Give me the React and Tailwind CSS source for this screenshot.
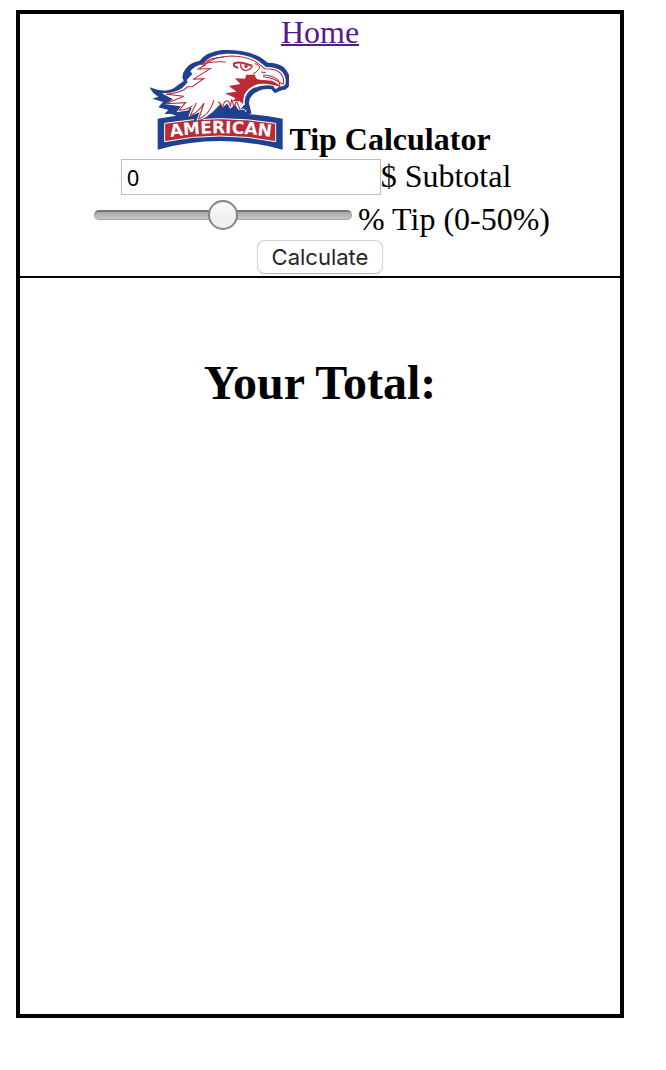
import { useState } from "react";

function EagleLogo() {
  return (
    <svg
      viewBox="28 30 420 300"
      role="img"
      aria-label="American eagle logo"
      className="h-[100px] w-[140px] shrink-0"
    >
      {/* blue outline of the head and feathers */}
      <path
        fill="#1f4190"
        d="M30 142 Q58 154 84 151 Q104 146 116 134 L132 123 L128 112 Q128 98 138 86 Q150 68 180 62 Q200 36 246 30 Q320 28 362 52 L385 68 Q412 68 431 80 Q452 100 451 126 Q448 150 426 151 L405 160 L395 148 Q368 144 344 160 Q328 172 328 190 L335 218 L318 226 L300 232 L190 242 L120 232 L96 222 L74 222 L86 210 L56 202 L70 186 L38 176 L56 170 Q38 160 30 142 Z"
      />
      {/* white head */}
      <path
        fill="#ffffff"
        d="M66 160 Q106 160 128 144 L144 127 L141 120 L158 102 L152 94 Q164 78 188 73 Q208 44 260 41 Q324 40 357 64 L379 81 Q410 81 425 93 Q440 108 438 130 Q434 142 420 139 L408 148 L400 137 Q368 132 340 145 Q318 158 315 183 L316 196 L296 214 L284 194 L272 206 L262 190 L250 204 L244 190 L214 222 L190 236 L172 242 L180 216 L148 230 L154 210 L110 217 L124 199 L76 193 L100 178 Z"
      />
      {/* red contour lines */}
      <g fill="none" stroke="#bb2a37" strokeWidth="3.2" strokeLinejoin="miter">
        <path d="M188 80 Q218 48 276 48 Q330 50 355 70 L376 86 Q408 86 422 99 Q435 114 431 132 Q420 130 412 122 Q394 112 370 110" />
        <path d="M198 74 L176 87 L212 86 L160 118 L192 116 L158 140 L144 140 Q130 158 79 163 L133 169 L78 191 L138 188 L118 211 Q146 210 170 189 L150 226 Q174 219 193 189 L177 238 Q208 232 222 180" />
        <path d="M196 230 Q220 216 232 188 Q240 180 248 206 Q252 182 262 182 Q270 184 272 200 L276 178 L285 207 Q286 184 292 186 L302 211" />
        <path d="M252 52 Q212 52 184 74 Q214 63 258 66" />
        <path d="M370 105 Q394 106 410 116 Q422 126 420 138" />
        <path d="M336 126 Q374 116 408 133" />
      </g>
      {/* red face patch */}
      <path
        fill="#bb2a37"
        d="M320 104 L346 104 Q346 117 360 119 L396 122 Q414 128 424 142 Q392 129 356 132 Q326 141 314 164 Q310 178 310 192 L300 184 L278 184 L288 175 L256 160 L290 155 L268 138 L302 132 L286 115 L316 116 Z"
      />
      {/* eye, brow and nostril */}
      <g fill="none" stroke="#bb2a37">
        <path strokeWidth="6" d="M296 83 Q280 80 283 71 Q294 65 312 70 L338 77" />
        <path strokeWidth="4" d="M303 72 Q302 89 318 92 Q334 90 338 77" />
        <path strokeWidth="3" d="M345 71 Q360 74 360 84 L350 96 L340 101 M364 96 L378 98" />
      </g>
      <circle cx="319" cy="79" r="5" fill="#bb2a37" />
      {/* neck details */}
      <path
        fill="#1f4190"
        d="M240 222 Q248 200 258 196 L272 218 Z M286 194 L304 220 L280 220 Z M302 208 L314 194 L328 200 L334 222 L300 222 Z"
      />
      <path fill="none" stroke="#ffffff" strokeWidth="3" d="M303 209 Q316 203 319 216" />
      {/* banner */}
      <path fill="#1f4190" d="M54 236 Q240 200 429 236 L429 329 Q240 277 54 329 Z" />
      <path
        fill="#bb2a37"
        stroke="#ffffff"
        strokeWidth="3"
        d="M75 250 Q240 222 408 250 L408 305 Q240 271 75 305 Z"
      />
      {/* feathers lying over the banner */}
      <path
        fill="#1f4190"
        d="M140 222 L152 234 L170 229 L160 245 Q192 244 214 222 L226 204 L150 204 Z"
      />
      <path
        fill="#ffffff"
        d="M160 192 L146 230 L180 217 L170 242 Q204 236 226 206 L236 184 L170 184 Z"
      />
      <path
        fill="none"
        stroke="#bb2a37"
        strokeWidth="3.2"
        d="M170 189 L152 226 Q176 218 193 189 L177 237 Q206 228 222 184"
      />
      <path id="banner-arc" fill="none" d="M79 293 Q241 267 408 293" />
      <text
        fill="#ffffff"
        className="font-['DejaVu_Sans',sans-serif] text-[51px] font-bold"
        textAnchor="middle"
      >
        <textPath href="#banner-arc" startOffset="50%">
          AMERICAN
        </textPath>
      </text>
    </svg>
  );
}

export default function App() {
  const [subtotal, setSubtotal] = useState("0");
  const [tip, setTip] = useState("25");
  const [total, setTotal] = useState("");

  function calculate(event) {
    event.preventDefault();
    setTotal((Number(subtotal) * (1 + Number(tip) / 100)).toFixed(2));
  }

  return (
    <main className="mt-[10px] mr-[42px] mb-12 ml-4 border-4 border-black bg-white font-['Liberation_Serif','Times_New_Roman',serif] text-[32px] leading-9 text-black">
      <form
        onSubmit={calculate}
        className="flex flex-col items-center border-b-2 border-black pb-[2px]"
      >
        <a href="#home" className="text-[#551a8b] underline decoration-2">
          Home
        </a>
        <div className="flex h-[108px] items-start">
          <EagleLogo />
          <h1 className="mt-[71px] font-bold">Tip Calculator</h1>
        </div>
        <div className="flex h-[38px] items-center pr-2">
          <input
            id="subtotal"
            type="text"
            value={subtotal}
            onChange={(event) => setSubtotal(event.target.value)}
            className="h-9 w-[260px] border border-[#bdbdbd] bg-white px-[5px] font-['Noto_Sans',sans-serif] text-[22px] leading-7"
          />
          <label htmlFor="subtotal" className="pb-[2px]">
            $ Subtotal
          </label>
        </div>
        <div className="flex h-11 items-start">
          <input
            id="tip"
            type="range"
            min="0"
            max="50"
            value={tip}
            onChange={(event) => setTip(event.target.value)}
            className="mt-1 mr-[6px] ml-1 h-[30px] w-[258px] appearance-none bg-transparent [&::-webkit-slider-runnable-track]:h-[10px] [&::-webkit-slider-runnable-track]:rounded-[5px] [&::-webkit-slider-runnable-track]:border [&::-webkit-slider-runnable-track]:border-t-2 [&::-webkit-slider-runnable-track]:border-[#a3a3a3] [&::-webkit-slider-runnable-track]:border-t-[#777777] [&::-webkit-slider-runnable-track]:bg-linear-to-b [&::-webkit-slider-runnable-track]:from-[#a8a8a8] [&::-webkit-slider-runnable-track]:to-[#c6c6c6] [&::-webkit-slider-thumb]:-mt-3 [&::-webkit-slider-thumb]:size-[30px] [&::-webkit-slider-thumb]:appearance-none [&::-webkit-slider-thumb]:rounded-full [&::-webkit-slider-thumb]:border-2 [&::-webkit-slider-thumb]:border-[#858585] [&::-webkit-slider-thumb]:bg-linear-to-b [&::-webkit-slider-thumb]:from-[#f8f8f8] [&::-webkit-slider-thumb]:to-[#ededed]"
          />
          <label htmlFor="tip" className="mt-[5px]">
            % Tip (0-50%)
          </label>
        </div>
        <button
          type="submit"
          className="h-[34px] rounded-lg border border-[#d0d0d0] border-b-[#b8b8b8] bg-white px-[14px] font-['Inter',sans-serif] text-[22px] leading-8 text-[#262626] shadow-xs"
        >
          Calculate
        </button>
      </form>
      <section className="min-h-[736px] pt-[77px] text-center">
        <h2 className="text-[48px] leading-[56px] font-bold">Your Total:</h2>
        <output htmlFor="subtotal tip">{total && `$${total}`}</output>
      </section>
    </main>
  );
}
